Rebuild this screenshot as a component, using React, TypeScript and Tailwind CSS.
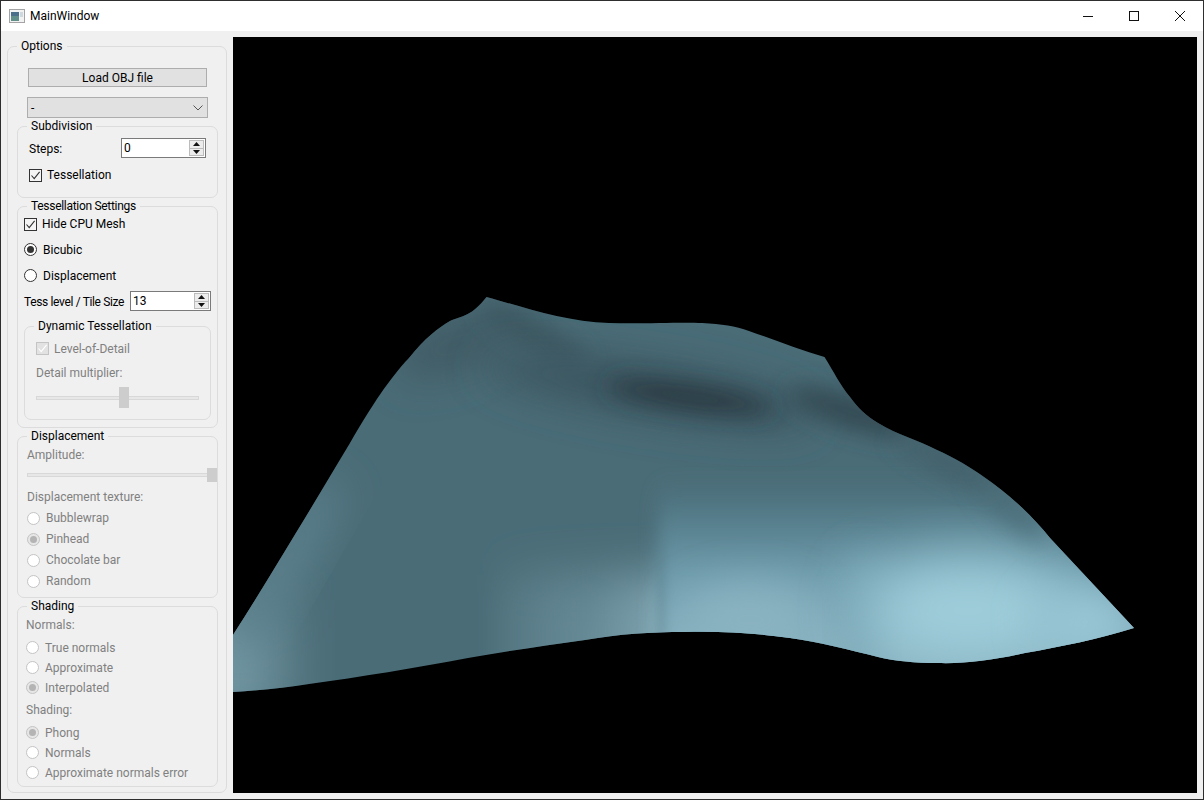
import type { ReactNode } from "react";

function GroupBox({ title, className, titleClass, children }: { title: string; className: string; titleClass?: string; children: ReactNode }) {
  return (
    <div className={`relative border border-[#dcdcdc] rounded-[7px] ${className}`}>
      <span className={`absolute -top-[9px] left-[9px] h-4 px-1 leading-4 bg-[#f0f0f0] text-black whitespace-nowrap ${titleClass ?? ""}`}>
        {title}
      </span>
      {children}
    </div>
  );
}

function CheckBox({ label, disabled }: { label: string; disabled?: boolean }) {
  return (
    <div className={`flex items-center h-5 gap-[5px] ${disabled ? "text-[#808080]" : "text-black"}`}>
      <span className={`w-[13px] h-[13px] border ${disabled ? "border-[#c4c4c4] bg-[#e2e2e2]" : "border-[#333333] bg-[#f4f4f4]"}`}>
        <svg viewBox="0 0 11 11" className="w-[11px] h-[11px]">
          <path d="M1.5 5.5 L4.2 8.6 L9.6 1.8" fill="none" stroke={disabled ? "#ffffff" : "#333333"} strokeWidth="1.1" />
        </svg>
      </span>
      <span className={disabled ? "mt-[2px]" : ""}>{label}</span>
    </div>
  );
}

function Radio({ label, checked, disabled, nudge }: { label: string; checked?: boolean; disabled?: boolean; nudge?: boolean }) {
  return (
    <div className={`flex items-center h-5 gap-[6px] ${disabled ? "text-[#808080]" : "text-black"}`}>
      <span
        className={`flex items-center justify-center w-[13px] h-[13px] rounded-full border ${
          disabled ? "border-[#c4c4c4]" : "border-[#333333]"
        } ${disabled && checked ? "bg-[#e6e6e6]" : "bg-white"}`}
      >
        {checked && <span className={`w-[7px] h-[7px] rounded-full ${disabled ? "bg-[#b4b4b4]" : "bg-[#333333]"}`} />}
      </span>
      <span className={nudge ? "mt-[2px]" : ""}>{label}</span>
    </div>
  );
}

function SpinBox({ value, className }: { value: string; className: string }) {
  return (
    <div className={`flex items-center justify-between shrink-0 h-5 border border-[#7a7a7a] bg-white text-black pl-[2px] pr-px ${className}`}>
      <span>{value}</span>
      <div className="flex flex-col w-[15px] h-4 border border-[#bcbcbc]">
        <div className="flex-1 flex items-center justify-center bg-[#ececec] border-b border-[#bcbcbc]">
          <svg viewBox="0 0 7 4" className="w-[7px] h-1">
            <path d="M3.5 0 L7 4 L0 4 Z" fill="#111111" />
          </svg>
        </div>
        <div className="flex-1 flex items-center justify-center bg-[#ececec]">
          <svg viewBox="0 0 7 4" className="w-[7px] h-1">
            <path d="M0 0 L7 0 L3.5 4 Z" fill="#111111" />
          </svg>
        </div>
      </div>
    </div>
  );
}

function Slider({ percent, className, tall }: { percent: number; className: string; tall?: boolean }) {
  return (
    <div className={`relative flex items-center ${className}`}>
      <div className="w-full h-1 bg-[#e7e7e7] border border-[#d8d8d8]" />
      <div
        className={`absolute top-0 w-[10px] bg-[#cdcdcd] ${tall ? "h-[21px]" : "h-[14px]"}`}
        style={{ left: `calc(${percent}% - ${percent / 10}px)` }}
      />
    </div>
  );
}

const OUTLINE =
  "M233 635 C262 590 310 510 350 443 C372 405 390 378 409 358 C425 338 438 328 450 321 C462 316 472 316 486.5 297 C520 306 565 322 609 323 C640 324 680 322 702 323 C722 324 735 326 749 331 C775 340 800 350 824.5 357 C834 372 840 385 850 397 C858 408 866 416 878 423 C898 435 918 440 937 450 C955 458 970 467 984 477 C1006 492 1030 513 1050 538 L1134 628 C1098 639 1060 647 1025 653 C995 660 965 664 937 663 C915 663 895 661 878 657 C850 650 820 642 790 638 C755 633 720 631 685 632 C650 632 620 634 585 640 C545 646 505 651 468 658 C415 668 360 677 309 684 C285 688 260 690 233 692 Z";

function Surface() {
  return (
    <svg viewBox="233 37 964 756" className="block w-[964px] h-[756px]">
      <defs>
        <clipPath id="mesh">
          <path d={OUTLINE} />
        </clipPath>
        <linearGradient id="mid" gradientUnits="userSpaceOnUse" x1="480" y1="0" x2="660" y2="0">
          <stop offset="0" stopColor="#7fa4b1" stopOpacity="0" />
          <stop offset="0.6" stopColor="#6c919d" stopOpacity="0.8" />
          <stop offset="1" stopColor="#80a5b1" />
        </linearGradient>
        <linearGradient id="plate" gradientUnits="userSpaceOnUse" x1="0" y1="480" x2="0" y2="640">
          <stop offset="0" stopColor="#527a88" stopOpacity="0" />
          <stop offset="0.25" stopColor="#567e8c" />
          <stop offset="0.6" stopColor="#6f9cac" />
          <stop offset="1" stopColor="#87b0bf" />
        </linearGradient>
        <filter id="soft-edge" x="-20%" y="-50%" width="140%" height="200%">
          <feGaussianBlur stdDeviation="5 24" />
        </filter>
        <filter id="b6" x="-50%" y="-50%" width="200%" height="200%">
          <feGaussianBlur stdDeviation="9 10" />
        </filter>
        <filter id="b12" x="-50%" y="-150%" width="200%" height="400%">
          <feGaussianBlur stdDeviation="12" />
        </filter>
        <filter id="b20" x="-50%" y="-150%" width="200%" height="400%">
          <feGaussianBlur stdDeviation="20" />
        </filter>
        <filter id="b30" x="-50%" y="-50%" width="200%" height="200%">
          <feGaussianBlur stdDeviation="30" />
        </filter>
      </defs>
      <g clipPath="url(#mesh)">
        <rect x="233" y="280" width="920" height="420" fill="#4a6c77" />
        <rect x="170" y="600" width="110" height="130" fill="#7297a3" filter="url(#b30)" />
        <ellipse cx="285" cy="565" rx="22" ry="100" fill="#5c818d" transform="rotate(30 285 565)" filter="url(#b20)" />
        <rect x="480" y="575" width="180" height="160" fill="url(#mid)" filter="url(#soft-edge)" />
        <rect x="658" y="470" width="520" height="240" fill="url(#plate)" filter="url(#b6)" />
        <ellipse cx="750" cy="620" rx="70" ry="36" fill="#8ab3c1" filter="url(#b20)" />
        <ellipse cx="862" cy="615" rx="20" ry="60" fill="#78a5b4" filter="url(#b20)" />
        <ellipse cx="968" cy="610" rx="105" ry="52" fill="#a0cfdc" filter="url(#b30)" />
        <ellipse cx="1085" cy="622" rx="50" ry="34" fill="#98c6d4" filter="url(#b20)" />
        <ellipse cx="1010" cy="508" rx="45" ry="11" fill="#4b6d78" transform="rotate(42 1010 508)" filter="url(#b12)" />
        <ellipse cx="455" cy="345" rx="65" ry="26" fill="#3f5a63" transform="rotate(-20 455 345)" filter="url(#b20)" />
        <ellipse cx="535" cy="335" rx="60" ry="12" fill="#3a535c" transform="rotate(28 535 335)" filter="url(#b12)" />
        <ellipse cx="650" cy="390" rx="170" ry="26" fill="#3b555e" transform="rotate(9 650 390)" filter="url(#b20)" />
        <ellipse cx="690" cy="397" rx="85" ry="11" fill="#26363c" transform="rotate(8 690 397)" filter="url(#b12)" />
        <ellipse cx="850" cy="412" rx="65" ry="15" fill="#314650" transform="rotate(18 850 412)" filter="url(#b12)" />
        <ellipse cx="945" cy="462" rx="55" ry="9" fill="#405c66" transform="rotate(28 945 462)" filter="url(#b12)" />
      </g>
    </svg>
  );
}

export default function App() {
  return (
    <div className="flex flex-col w-[1204px] h-[800px] border border-[#2e2e2e] bg-[#f0f0f0] text-[12px] font-['Roboto',sans-serif] overflow-hidden">
      {/* Title bar */}
      <div className="flex items-center justify-between h-[30px] shrink-0 bg-white text-black">
        <div className="flex items-center gap-[5px] pl-2">
          <svg viewBox="0 0 16 14" className="w-4 h-[14px]">
            <rect x="0.5" y="0.5" width="15" height="13" fill="#f2f2f2" stroke="#a4a4a4" />
            <rect x="2" y="3" width="8" height="9" fill="#5f8f88" />
            <rect x="2" y="3" width="8" height="4" fill="#4a6f8a" />
            <rect x="11" y="3" width="3" height="5" fill="#cfd8dc" />
          </svg>
          <span>MainWindow</span>
        </div>
        <div className="flex">
          <div className="flex items-center justify-center w-[46px] h-[30px]">
            <svg viewBox="0 0 10 10" className="w-[10px] h-[10px]">
              <path d="M0 5.5 H10" stroke="#111111" />
            </svg>
          </div>
          <div className="flex items-center justify-center w-[46px] h-[30px]">
            <svg viewBox="0 0 10 10" className="w-[10px] h-[10px]">
              <rect x="0.5" y="0.5" width="9" height="9" fill="none" stroke="#111111" />
            </svg>
          </div>
          <div className="flex items-center justify-center w-[46px] h-[30px]">
            <svg viewBox="0 0 10 10" className="w-[10px] h-[10px]">
              <path d="M0 0 L10 10 M10 0 L0 10" stroke="#111111" />
            </svg>
          </div>
        </div>
      </div>

      <div className="flex flex-1 min-h-0">
        {/* Options panel */}
        <div className="w-[232px] shrink-0 pt-[15px] pl-[6px]">
          <GroupBox title="Options" className="w-[220px] h-[747px]">
            <button className="block w-[179px] h-[19px] ml-5 mt-[21px] bg-[#e1e1e1] border border-[#adadad] text-black leading-none">
              Load OBJ file
            </button>
            <div className="flex items-center justify-between w-[181px] h-[21px] ml-[19px] mt-[10px] pl-[3px] pr-1 bg-[#e1e1e1] border border-[#adadad] text-black">
              -
              <svg viewBox="0 0 10 6" className="w-[10px] h-[6px]">
                <path d="M0.5 0.5 L5 5 L9.5 0.5" fill="none" stroke="#555555" />
              </svg>
            </div>

            <GroupBox title="Subdivision" className="w-[201px] h-[72px] ml-[9px] mt-2">
              <div className="flex items-center justify-between h-5 mt-[11px] px-[11px] text-black">
                <span className="mt-[2px]">Steps:</span>
                <SpinBox value="0" className="w-[85px]" />
              </div>
              <div className="mt-[7px] pl-[11px]">
                <CheckBox label="Tessellation" />
              </div>
            </GroupBox>

            <GroupBox title="Tessellation Settings" titleClass="tracking-[-0.3px]" className="w-[201px] h-[222px] ml-[9px] mt-2">
              <div className="mt-[7px] pl-[6px]">
                <CheckBox label="Hide CPU Mesh" />
              </div>
              <div className="mt-[5px] pl-[6px]">
                <Radio label="Bicubic" checked nudge />
              </div>
              <div className="mt-[6px] pl-[6px]">
                <Radio label="Displacement" nudge />
              </div>
              <div className="flex items-center justify-between h-5 mt-[6px] px-[6px] text-black whitespace-nowrap">
                <span className="mt-[2px] tracking-[-0.35px]">Tess level / Tile Size</span>
                <SpinBox value="13" className="w-[81px]" />
              </div>
              <GroupBox title="Dynamic Tessellation" className="w-[187px] h-[94px] ml-[6px] mt-[15px]">
                <div className="mt-[11px] pl-[11px]">
                  <CheckBox label="Level-of-Detail" disabled />
                </div>
                <div className="flex items-center h-5 mt-[5px] pl-[11px] text-[#808080]">Detail multiplier:</div>
                <Slider percent={54} tall className="w-[163px] h-[21px] ml-[11px] mt-1" />
              </GroupBox>
            </GroupBox>

            <GroupBox title="Displacement" className="w-[201px] h-[162px] ml-[9px] mt-2">
              <div className="flex items-center h-5 mt-2 pl-[9px] text-[#808080]">Amplitude:</div>
              <Slider percent={100} className="w-[190px] h-[14px] ml-[9px] mt-[3px]" />
              <div className="flex items-center h-5 mt-[5px] pl-[9px] text-[#808080]">Displacement texture:</div>
              <div className="flex flex-col gap-px mt-px pl-[9px]">
                <Radio label="Bubblewrap" disabled />
                <Radio label="Pinhead" checked disabled />
                <Radio label="Chocolate bar" disabled />
                <Radio label="Random" disabled />
              </div>
            </GroupBox>

            <GroupBox title="Shading" className="w-[201px] h-[181px] ml-[9px] mt-2">
              <div className="flex items-center h-5 mt-2 pl-2 text-[#808080]">Normals:</div>
              <div className="flex flex-col mt-[2px] pl-2">
                <Radio label="True normals" disabled nudge />
                <Radio label="Approximate" disabled nudge />
                <Radio label="Interpolated" checked disabled nudge />
              </div>
              <div className="flex items-center h-5 mt-[2px] pt-[2px] pl-2 text-[#808080]">Shading:</div>
              <div className="flex flex-col mt-[3px] pl-2">
                <Radio label="Phong" checked disabled nudge />
                <Radio label="Normals" disabled nudge />
                <Radio label="Approximate normals error" disabled nudge />
              </div>
            </GroupBox>
          </GroupBox>
        </div>

        {/* OpenGL viewport */}
        <div className="w-[964px] h-[756px] mt-[6px] bg-black">
          <Surface />
        </div>
      </div>
    </div>
  );
}
